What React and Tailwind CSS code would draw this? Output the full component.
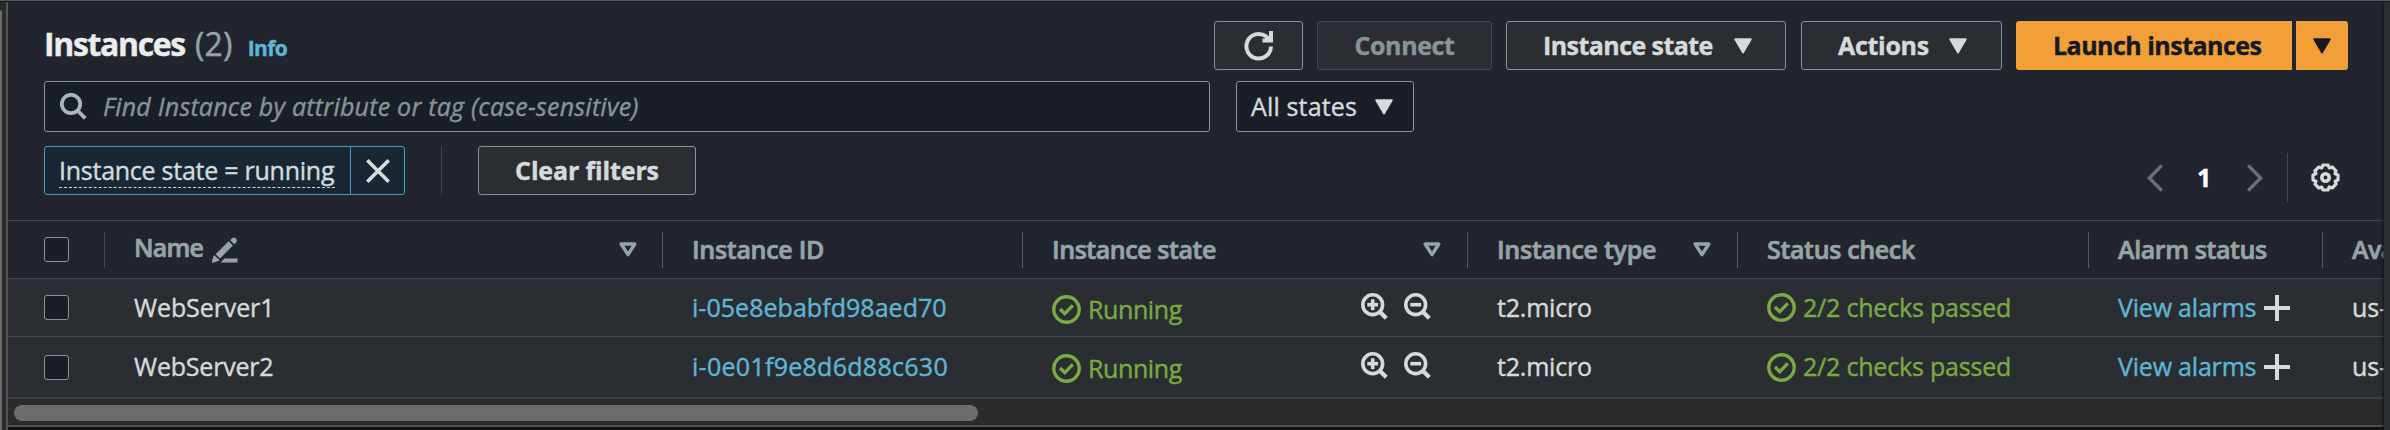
import React from "react";

function Caret({ className = "" }) {
  return (
    <svg viewBox="0 0 18 16" className={`h-4 w-[18px] shrink-0 ${className}`}>
      <path d="M1.2 1.2H16.8L9 14.6Z" fill="currentColor" stroke="currentColor" strokeWidth="1.8" strokeLinejoin="round" />
    </svg>
  );
}

function SortCaret() {
  return (
    <svg viewBox="0 0 18 15" className="mb-px h-[15px] w-[18px] shrink-0">
      <path d="M2.2 2H15.8L9 12.6Z" fill="none" stroke="currentColor" strokeWidth="3.4" strokeLinejoin="round" />
    </svg>
  );
}

function Refresh() {
  return (
    <svg viewBox="0 0 30 30" className="size-[30px]" fill="none" stroke="currentColor" strokeWidth="4">
      <path d="M27 15.5A12.3 12.3 0 1 1 21.8 5.2L26.5 9.6" />
      <path d="M27 0V9.6H18.5" />
    </svg>
  );
}

function Search() {
  return (
    <svg viewBox="0 0 27 27" className="size-[27px] shrink-0" fill="none" stroke="currentColor" strokeWidth="3.8">
      <circle cx="11" cy="11" r="9.2" />
      <path d="M17.5 17.5L25.3 25.3" />
    </svg>
  );
}

function Zoom({ plus }) {
  return (
    <svg viewBox="0 0 27 27" className="size-[27px] shrink-0" fill="none" stroke="currentColor" strokeWidth="3.6">
      <circle cx="11.7" cy="11.7" r="9.9" />
      <path d="M18.5 18.5L25.3 25.3" strokeWidth="4.2" />
      <path d="M6.3 11.7H17.1" />
      {plus && <path d="M11.7 6.3V17.1" />}
    </svg>
  );
}

function Check() {
  return (
    <svg viewBox="0 0 29 29" className="size-[29px] shrink-0" fill="none" stroke="currentColor" strokeWidth="3.4">
      <circle cx="14.5" cy="14.5" r="12.7" />
      <path d="M8 14L12.8 18.6L20.8 10.4" />
    </svg>
  );
}

function Pencil() {
  return (
    <svg viewBox="0 0 26 26" className="size-[26px] shrink-0" fill="currentColor">
      <path d="M0 25.5L2.2 18.6L7 23.3Z" stroke="currentColor" strokeWidth="1" strokeLinejoin="round" />
      <path d="M3.6 17.2L16.6 4.2L20.9 8.5L8 21.6Z" />
      <path d="M18.2 3.2L20.3 1A3 3 0 0 1 24.5 5L22.2 7.2Z" />
      <path d="M12.4 21.4H25.5V25.5H8.6Z" />
    </svg>
  );
}

function Chevron({ flip }) {
  return (
    <svg viewBox="0 0 16 28" className={flip ? "h-7 w-4 -scale-x-100" : "h-7 w-4"} fill="none" stroke="currentColor" strokeWidth="3.4">
      <path d="M14.8 1.4L2.4 14L14.8 26.6" />
    </svg>
  );
}

function Gear() {
  return (
    <svg viewBox="0 0 29 29" className="size-[29px]" fill="none" stroke="currentColor" strokeWidth="3.2" strokeLinejoin="round">
      <path d="M11.9 2H17.1L18.2 4.9L21.2 3.9L25 7.8L24 10.7L27 11.9V17.1L24.1 18.2L25.1 21.1L21.2 25L18.2 24L17.1 27H11.9L10.8 24.1L7.8 25L4 21.2L5 18.2L2 17.1V11.9L4.9 10.8L3.9 7.8L7.8 4L10.8 5Z" />
      <circle cx="14.5" cy="14.5" r="3.7" strokeWidth="3.6" />
    </svg>
  );
}

function Plus() {
  return (
    <svg viewBox="0 0 26 26" className="size-[26px] shrink-0" stroke="currentColor" strokeWidth="4">
      <path d="M13 0V26M0 13H26" />
    </svg>
  );
}

function Checkbox() {
  return <span className="block size-[25px] rounded-[3px] border-[1.5px] border-[#879596] bg-[#1a1e27]" />;
}

const button = "flex h-[49px] items-center rounded-[3px] border border-[#879596] bg-[#2a2e33] font-bold text-[#d5dbdb]";
const columns = "grid grid-cols-[97px_558px_360px_445px_270px_351px_234px_200px]";

function Head({ children, className = "", last }) {
  return (
    <div className={`flex h-9 items-center justify-between self-center pl-[29px] ${last ? "" : "border-r border-[#545b64]"} ${className}`}>
      {children}
    </div>
  );
}

const rows = [
  { name: "WebServer1", id: "i-05e8ebabfd98aed70", height: "h-[57px]", border: "border-b border-[#414750]", idClass: "tracking-[0.04px]", nameClass: "tracking-[-0.1px]", run: "pt-[3px]" },
  { name: "WebServer2", id: "i-0e01f9e8d6d88c630", height: "h-[60px]", border: "", idClass: "tracking-[0.28px]", nameClass: "tracking-[-0.2px]", run: "pt-[2px]" },
];

export default function App() {
  return (
    <div className="flex h-[430px] w-[2390px] flex-col overflow-hidden whitespace-nowrap border-t border-[#545b64] bg-[#22252d] font-['Open_Sans',sans-serif] text-[25px] leading-9 text-[#d5dbdb] [-webkit-text-stroke:0.4px]">
      <div className="flex h-[429px] border-t border-[#16191f]">
        <div className="flex w-2 shrink-0 justify-between bg-[#2b2b2b]">
          <div className="mt-2 w-0.5 rounded-tr-sm bg-[#6b6b6b]" />
          <div className="w-0.5 bg-[#555555]" />
        </div>

        <div className="flex h-[428px] w-[2376px] shrink-0 flex-col overflow-hidden">
          <div className="flex h-[218px] shrink-0 flex-col pl-9 pr-9 pt-[19px]">
            <div className="flex h-[49px] items-center justify-between">
              <div className="flex items-baseline">
                <h1 className="text-[32px] font-bold tracking-[-1.35px] text-[#eaeded]">Instances</h1>
                <span className="ml-[10px] text-[32px] tracking-[0.2px] text-[#95a5a6]">(2)</span>
                <a className="ml-[15px] text-[21px] font-bold tracking-[-0.6px] text-[#5fb5d5]">Info</a>
              </div>
              <div className="flex">
                <button className={`${button} w-[89px] justify-center`}>
                  <Refresh />
                </button>
                <button className="ml-[14px] flex h-[49px] w-[175px] items-center justify-center rounded-[3px] border border-[#414750] bg-[#2a2e33] pb-0.5 font-bold tracking-[-0.4px] text-[#879596]">
                  Connect
                </button>
                <button className={`${button} ml-[14px] w-[280px] justify-between pl-[36px] pr-[33px]`}>
                  <span className="pb-0.5 tracking-[-0.56px]">Instance state</span>
                  <Caret />
                </button>
                <button className={`${button} ml-[15px] w-[201px] justify-between pl-[36px] pr-[34px]`}>
                  <span className="pb-0.5 tracking-[-0.3px]">Actions</span>
                  <Caret />
                </button>
                <button className="ml-[14px] flex h-[49px] w-[276px] items-center rounded-l-[3px] bg-[#f29f38] pb-0.5 pl-[37px] font-bold tracking-[-0.52px] text-[#16191f]">
                  Launch instances
                </button>
                <button className="ml-1 flex h-[49px] w-[52px] items-center justify-center rounded-r-[3px] bg-[#f29f38] text-[#16191f]">
                  <Caret />
                </button>
              </div>
            </div>

            <div className="mt-[11px] flex h-[51px]">
              <div className="flex w-[1166px] items-center rounded-[3px] border border-[#879596] bg-[#1a1e27] pl-[15px]">
                <span className="text-[#aab7b8]"><Search /></span>
                <span className="ml-[16px] pb-0.5 italic tracking-[0.23px] text-[#879596]">Find Instance by attribute or tag (case-sensitive)</span>
              </div>
              <div className="ml-[26px] flex w-[178px] items-center justify-between rounded-[3px] border border-[#879596] bg-[#1a1e27] pl-[14px] pr-[20px]">
                <span className="pb-0.5 tracking-[0.15px]">All states</span>
                <Caret />
              </div>
            </div>

            <div className="mt-[14px] flex items-start justify-between">
              <div className="flex h-[49px]">
                <div className="flex w-[361px] rounded-[3px] border border-[#429bcd] bg-[#192735]">
                  <div className="flex w-[306px] items-center border-r border-[#429bcd] pl-[14px]">
                    <span className="flex h-[34px] w-[276px] items-center border-b border-dashed border-[#d5dbdb] tracking-[-0.25px]">
                      Instance state = running
                    </span>
                  </div>
                  <div className="flex flex-1 items-center justify-center">
                    <svg viewBox="0 0 24 24" className="size-6" stroke="currentColor" strokeWidth="3.6">
                      <path d="M1.3 1.3L22.7 22.7M22.7 1.3L1.3 22.7" />
                    </svg>
                  </div>
                </div>
                <div className="ml-9 w-px bg-[#414750]" />
                <button className={`${button} ml-9 w-[218px] justify-center pb-px tracking-[-0.14px]`}>Clear filters</button>
              </div>
              <div className="mt-[7px] flex h-[49px] items-center pr-[8px]">
                <span className="text-[#687078]"><Chevron /></span>
                <span className="ml-[34px] w-[16px] pb-px font-bold text-white">1</span>
                <span className="ml-[34px] text-[#687078]"><Chevron flip /></span>
                <div className="ml-6 h-[49px] w-px bg-[#414750]" />
                <span className="ml-[23px]"><Gear /></span>
              </div>
            </div>
          </div>

          <div className={`${columns} h-[59px] shrink-0 border-y border-[#414750] font-semibold text-[#95a5a6] [-webkit-text-stroke:0.7px]`}>
            <div className="flex h-9 items-center self-center border-r border-[#414750] pl-9">
              <Checkbox />
            </div>
            <Head className="pr-[25px]">
              <span className="flex items-center">
                <span className="pb-1.5 tracking-[-0.8px]">Name</span>
                <span className="ml-[9px]"><Pencil /></span>
              </span>
              <SortCaret />
            </Head>
            <Head><span className="pb-px tracking-[-0.29px]">Instance ID</span></Head>
            <Head className="pr-[26px]"><span className="pb-px tracking-[-0.44px]">Instance state</span><SortCaret /></Head>
            <Head className="pr-[26px]"><span className="pb-px tracking-[-0.26px]">Instance type</span><SortCaret /></Head>
            <Head><span className="pb-px tracking-[-0.34px]">Status check</span></Head>
            <Head><span className="pb-px tracking-[-0.4px]">Alarm status</span></Head>
            <Head last><span className="pb-px tracking-[-0.6px]">Availability Zone</span></Head>
          </div>

          {rows.map((r) => (
            <div key={r.name} className={`box-content shrink-0 items-center bg-[#2a2e33] ${columns} ${r.height} ${r.border}`}>
              <div className="pl-9"><Checkbox /></div>
              <div className={`pb-0.5 pl-[29px] ${r.nameClass}`}>{r.name}</div>
              <div className={`pb-0.5 pl-[29px] text-[#5fb5d5] ${r.idClass}`}>{r.id}</div>
              <div className="flex items-center pl-[29px]">
                <span className={`flex items-center text-[#7aaa41] ${r.run}`}>
                  <Check />
                  <span className="ml-[7px] pb-px tracking-[-0.4px]">Running</span>
                </span>
                <span className="ml-auto mr-[37px] flex gap-4 pb-[3px]">
                  <Zoom plus />
                  <Zoom />
                </span>
              </div>
              <div className="pb-0.5 pl-[29px] tracking-[-0.2px]">t2.micro</div>
              <div className="flex items-center pl-[29px] text-[#7aaa41]">
                <Check />
                <span className="ml-[7px] pb-0.5 tracking-[-0.2px]">2/2 checks passed</span>
              </div>
              <div className="flex items-center pl-[29px]">
                <span className="pb-0.5 tracking-[-0.2px] text-[#5fb5d5]">View alarms</span>
                <span className="ml-[8px]"><Plus /></span>
              </div>
              <div className="pb-0.5 pl-[29px]">us-east-1a</div>
            </div>
          ))}

          <div className="h-[30px] shrink-0 border-y-2 border-t-[#3d3d3d] border-b-[#505050] bg-[#2b2b2b] pl-1.5 pt-1.5">
            <div className="h-4 w-[964px] rounded-full bg-[#6b6b6b]" />
          </div>
          <div className="flex-1 bg-[#101218]" />
        </div>

        <div className="z-10 flex-1 bg-[#2a2e33] shadow-[-1px_0_3px_#101218]" />
      </div>
    </div>
  );
}
